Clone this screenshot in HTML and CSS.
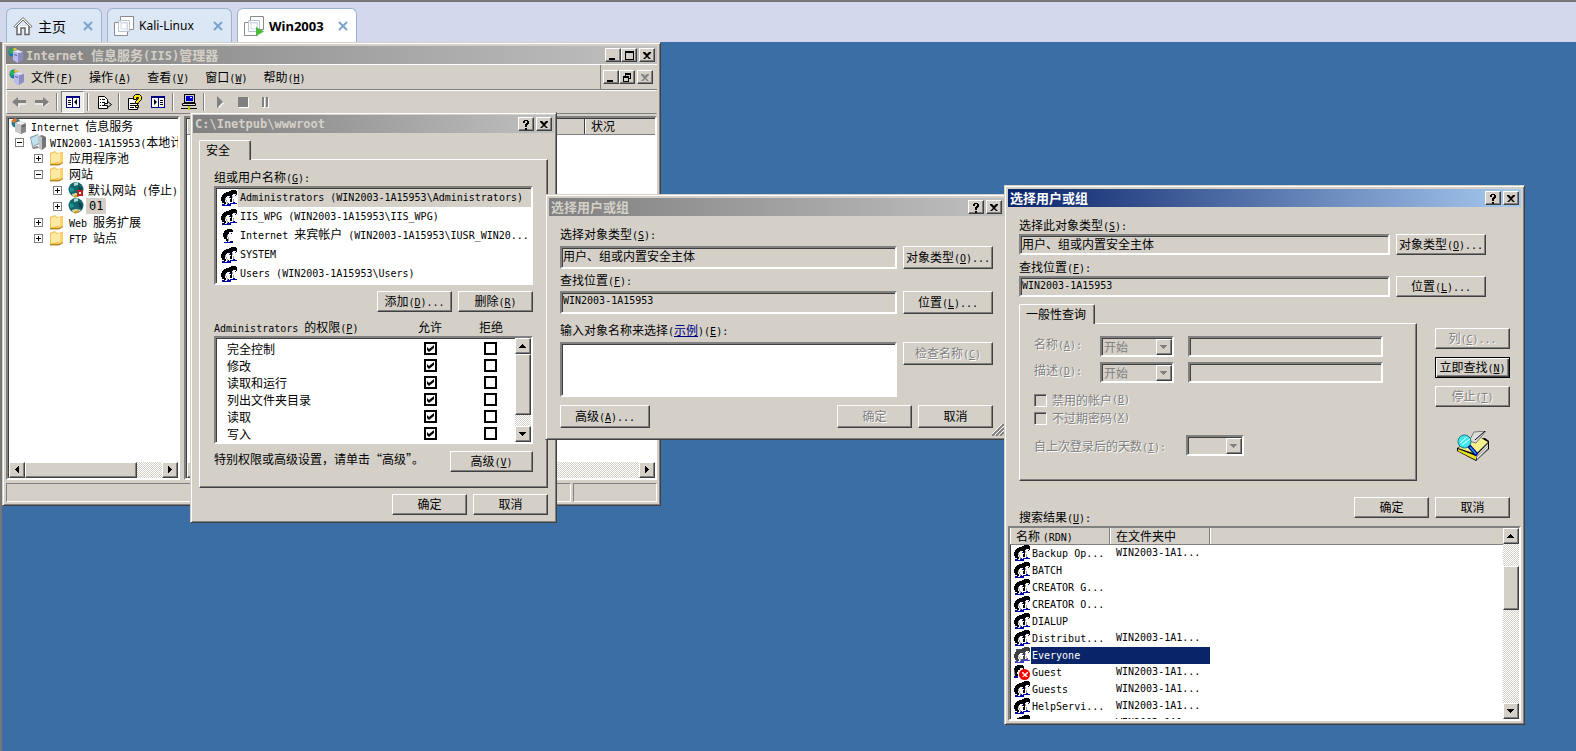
FILE: index.html
```html
<!DOCTYPE html>
<html lang="zh-CN">
<head>
<meta charset="utf-8">
<title>Win2003</title>
<link rel="stylesheet" href="styles.css">
</head>
<body>
<svg class="sprite" aria-hidden="true">
  <symbol id="i-group" viewBox="0 0 16 16">
    <path d="M7 3V2h1V1h2V0h5v1h1v4h-1v6h-2v1H8V5H7z" fill="#000"/>
    <path d="M11 5h1V4h3v3h1v1h-1v3h-2v1h-2z" fill="#fff"/><path d="M11 6h1v2h-1zM12 9h1v3h-1z" fill="#a0a0a0"/><path d="M14 5h1v1h-1z" fill="#00f"/>
    <path d="M9 14v-1h3v-1h2v1h2v1z" fill="#0000a8"/>
    <path d="M0 7h1V5h1V4h1V3h2V2h3v1h1v3h1v1H8v5H6v2H3v-1H1v-2H0z" fill="#000"/>
    <path d="M4 8h1V7h1V6h3v2h1v1H9v3H7v2H5v-2H4z" fill="#fff"/><path d="M4 8h1v2H4zM5 10h1v2H5zM6 12h1v2H6z" fill="#a0a0a0"/><path d="M8 7h1v1H8z" fill="#00f"/>
    <path d="M1 14h3v1h2v-1h1v-1h1v1h2v2H1z" fill="#0000a8"/>
  </symbol>
  <symbol id="i-user" viewBox="0 0 16 16">
    <path d="M2 5h1V3h1V2h2V1h5v1h1v3h-1v7H8v1H5v-2H3V9H2z" fill="#000"/>
    <path d="M6 7h1V6h1V4h4v3h1v1h-1v4H9v2H7v-3H6z" fill="#fff"/><path d="M6 7h1v2H6zM7 9h1v4H7z" fill="#a0a0a0"/><path d="M10 5h1v1h-1z" fill="#00f"/>
    <path d="M3 14h3v-1h1v1h2v-1h3v2H3z" fill="#0000a8"/>
  </symbol>
  <symbol id="i-guest" viewBox="0 0 16 16">
    <path d="M0 4h1V2h2V1h6v1h1v7H9v3H3v1H1z" fill="#000"/><path d="M4 6h2V4h3v4H8v3H5v2H4v-3H3V8h1z" fill="#fff"/><path d="M0 12h4v2H0z" fill="#0000a8"/>
    <circle cx="10.500" cy="10.500" r="5.500" fill="#f00"/><path d="M8 8h1l2 2 2-2h1v1l-2 2 2 2h-2l-1-1-2 1H8l2-2-2-2z" fill="#fff"/>
  </symbol>
  <symbol id="i-folder" viewBox="0 0 16 16">
    <path d="M1 3l5-2 2 2 6-1v11l-4 2-9-1z" fill="#f1c14e"/><path d="M2 4l4-2 1 2 5-1v9l-10 1z" fill="#ffe9a6"/><path d="M11 5l3-2v10l-3 2z" fill="#ffd566"/><path d="M1 14h9l4-2v1l-4 2.500H1z" fill="#b78a2c"/>
  </symbol>
  <symbol id="i-iis" viewBox="0 0 16 16">
    <circle cx="5" cy="5" r="4.500" fill="#1878a8"/><path d="M1 3l3-2 2 2-1 3-3 1z" fill="#30b050"/><path d="M5 1h3l1 2-3 1z" fill="#f0c020"/>
    <path d="M5 4l5-1 5 2v8l-5 3-5-3z" fill="#8c8cc4"/><path d="M5 4l5 2v10l-5-3z" fill="#b9b9ec"/><path d="M5 4l5-1 5 2-5 1z" fill="#e4e4fa"/><path d="M6 7l3 1v1L6 8z" fill="#5858a0"/>
  </symbol>
  <symbol id="i-globes" viewBox="0 0 16 16">
    <circle cx="5" cy="5" r="4.500" fill="#187c94"/><path d="M0 3l4-3 3 2-4 3z" fill="#e07830"/>
    <path d="M4 5l5-2 6 2v9l-5 2-6-3z" fill="#888"/><path d="M4 5l6 2v9l-6-3z" fill="#c8c8c8"/><path d="M4 5l5-2 6 2-5 2z" fill="#eee"/><path d="M11 8l3-1v1l-3 1z" fill="#444"/>
  </symbol>
  <symbol id="i-server" viewBox="0 0 16 16">
    <path d="M0 3l8-3 2 10-8 3z" fill="#8c9aa4"/><path d="M1 4l7-3 1 8-6 3z" fill="#bfe3ef"/><path d="M2 13l6-1 1 2-6 1z" fill="#888"/>
    <path d="M9 2l3-1 4 2v10l-4 3-3-2z" fill="#777"/><path d="M9 2l3 1v13l-3-2z" fill="#c4c4c4"/><path d="M13 5h2v1h-2z" fill="#3070b0"/>
  </symbol>
  <symbol id="i-site" viewBox="0 0 16 16">
    <circle cx="8" cy="7.500" r="7.500" fill="#12666c"/><path d="M6 1l4-1v3l-4 1z" fill="#b8d8d4"/><path d="M2 5l3 1 1 3-4 1z" fill="#1e9494"/><path d="M10 4l4 2v5l-3-2z" fill="#0c4450"/><path d="M4 12l4-1 5 1-2 2-6 1z" fill="#e8dca0"/><path d="M5 14l6-2v2l-4 2z" fill="#c8a030"/>
  </symbol>
  <symbol id="i-vm" viewBox="0 0 20 20">
    <g fill="#fff" stroke="#8a8a8a"><path d="M6.500.500h13v13h-13z"/><path d="M.500 6.500h13v13H.500z"/></g><path d="M4.500 4.500h11v11h-11z" fill="#fff" fill-opacity=".7" stroke="#b8c4d4"/><path d="M7 7h6v6H7z" fill="none" stroke="#cdd9e8"/>
  </symbol>
  <symbol id="a-up" viewBox="0 0 8 4"><path d="M0 4h7V3H6V2H5V1H4V0H3v1H2v1H1v1H0z" fill="currentColor"/></symbol>
  <symbol id="a-down" viewBox="0 0 8 4"><path d="M0 0h7v1H6v1H5v1H4v1H3V3H2V2H1V1H0z" fill="currentColor"/></symbol>
  <symbol id="a-left" viewBox="0 0 4 8"><path d="M4 0v7H3V6H2V5H1V4H0V3h1V2h1V1h1V0z" fill="currentColor"/></symbol>
  <symbol id="a-right" viewBox="0 0 4 8"><path d="M0 0v7h1V6h1V5h1V4h1V3H3V2H2V1H1V0z" fill="currentColor"/></symbol>
  <symbol id="c-close" viewBox="0 0 16 14"><path d="M3 3h2l2 2 2-2h2v1L8 7l3 3H9L7 8l-2 2H3l3-3-3-3z" fill="currentColor"/></symbol>
  <symbol id="c-help" viewBox="0 0 16 14"><path d="M4 3h1V2h4v1h1v3H9v1H8v2H6V6h1V5h1V3H6v2H4zM6 10h2v2H6z" fill="currentColor"/></symbol>
  <symbol id="c-min" viewBox="0 0 16 14"><path d="M3 9h6v2H3z" fill="currentColor"/></symbol>
  <symbol id="c-max" viewBox="0 0 16 14"><path d="M3 2h9v9H3zM4 4v6h7V4z" fill="currentColor" fill-rule="evenodd"/></symbol>
  <symbol id="c-restore" viewBox="0 0 16 14"><path d="M5 2h6v6H9V7h1V4H6v1H5zM3 5h6v6H3zm1 2v3h4V7z" fill="currentColor" fill-rule="evenodd"/></symbol>
</svg>

<nav class="vm-tabs">
  <div class="vm-tab home">
    <svg class="vm-icon" viewBox="0 0 20 20"><path d="M1 10.500L10 1.500l9 9-1.500 1L10 4 2.500 11.500z" fill="#fff" stroke="#666"/><path d="M4 10v8.500h4V12h4v6.500h4V10" fill="#fff" stroke="#666" stroke-width="1.500"/></svg>
    <span class="cn">主页</span>
    <button class="tab-close" aria-label="关闭 主页"><svg viewBox="0 0 10 10"><path d="M1 1l8 8M9 1L1 9"/></svg></button>
  </div>
  <div class="vm-tab kali">
    <svg class="vm-icon"><use href="#i-vm"/></svg>
    <span>Kali-Linux</span>
    <button class="tab-close" aria-label="关闭 Kali-Linux"><svg viewBox="0 0 10 10"><path d="M1 1l8 8M9 1L1 9"/></svg></button>
  </div>
  <div class="vm-tab current">
    <svg class="vm-icon" viewBox="0 0 20 20"><use href="#i-vm"/><path d="M12 11l8 4.500-8 4.500z" fill="#4cb83c"/></svg>
    <span>Win2003</span>
    <button class="tab-close" aria-label="关闭 Win2003"><svg viewBox="0 0 10 10"><path d="M1 1l8 8M9 1L1 9"/></svg></button>
  </div>
</nav>

<main class="desktop">

<section class="window iis">
  <header class="title">
    <svg class="ico"><use href="#i-iis"/></svg>
    <h1><span class="l">Internet </span>信息服务<span class="l">(IIS)</span>管理器</h1>
    <div class="caption"><button aria-label="最小化"><svg><use href="#c-min"/></svg></button><button aria-label="最大化"><svg><use href="#c-max"/></svg></button><button class="apart" aria-label="关闭"><svg><use href="#c-close"/></svg></button></div>
  </header>
  <div class="menubar">
    <svg class="ico"><use href="#i-iis"/></svg>
    <button>文件<span class="l">(<u>F</u>)</span></button><button>操作<span class="l">(<u>A</u>)</span></button><button>查看<span class="l">(<u>V</u>)</span></button><button>窗口<span class="l">(<u>W</u>)</span></button><button>帮助<span class="l">(<u>H</u>)</span></button>
    <div class="caption mdi"><button aria-label="最小化"><svg><use href="#c-min"/></svg></button><button aria-label="还原"><svg><use href="#c-restore"/></svg></button><button class="apart" disabled aria-label="关闭"><svg><use href="#c-close"/></svg></button></div>
  </div>
  <div class="toolbar">
    <button aria-label="后退"><svg viewBox="0 0 16 16"><path d="M3 9l5 4v-3h7" stroke="#fff" fill="none"/><path d="M1 8l6-5v3h8v3H7v4z" fill="#808080"/></svg></button>
    <button aria-label="前进"><svg viewBox="0 0 16 16"><path d="M1 10h8v3l6-4" stroke="#fff" fill="none"/><path d="M15 8L9 3v3H1v3h8v4z" fill="#808080"/></svg></button>
    <i></i>
    <button class="pressed" aria-label="显示树"><svg viewBox="0 0 16 16"><path d="M1 2h14v12H1z" fill="#000080"/><path d="M2 4h5v9H2zM8 4h6v9H8z" fill="#fff"/><path d="M3 6h3v1H3zM3 8h3v1H3zM3 10h3v1H3zM12 5v6L9 8z" fill="#000"/></svg></button>
    <i></i>
    <button aria-label="导出列表"><svg viewBox="0 0 16 16"><path d="M2.500 2.500h6l3 3v9h-9z" fill="#fff" stroke="#000"/><path d="M4 5h1v1H4zM6 5h3v1H6zM4 8h1v1H4zM6 8h3v1H6zM4 11h1v1H4zM6 11h3v1H6z" fill="#000"/><path d="M8.500 9.500h3v-2l4 3-4 3v-2h-3z" fill="#ddd" stroke="#000"/></svg></button>
    <i></i>
    <button aria-label="帮助"><svg viewBox="0 0 16 16"><path d="M1.500 4.500h9v11h-9z" fill="#fff" stroke="#000"/><path d="M3 9h5v1H3zM3 11h6v1H3zM3 13h4v1H3z" fill="#000"/><path d="M6.500 5.500v-3l2-2h4l2 2v3l-3 3v1h-3v-2l3-3v-1h-2v2zM8.500 11.500h3v2h-3z" fill="#ffe800" stroke="#000"/></svg></button>
    <button aria-label="显示操作窗格"><svg viewBox="0 0 16 16"><path d="M1 2h14v12H1z" fill="#000080"/><path d="M2 4h6v9H2zM9 4h5v9H9z" fill="#fff"/><path d="M10 6h3v1h-3zM10 8h3v1h-3zM10 10h3v1h-3zM4 5v6l3-3z" fill="#000"/></svg></button>
    <i></i>
    <button aria-label="连接计算机"><svg viewBox="0 0 16 16"><path d="M3 0h11v9H3z" fill="#000"/><path d="M4 1h9v7H4z" fill="#d4d0c8"/><path d="M5 2h7v5H5z" fill="#0000d0"/><path d="M9 3h2v1H9z" fill="#fff"/><path d="M1.500 9.500h13v2h-13z" fill="#ddd" stroke="#000"/><path d="M0 14h16v1H0z" fill="#000"/><path d="M7 12h2v4H7z" fill="#c8c800"/></svg></button>
    <i></i>
    <button aria-label="启动"><svg viewBox="0 0 16 16"><path d="M6 4l6 5-5 5z" fill="#fff"/><path d="M5 2l6 6-6 6z" fill="#808080"/></svg></button>
    <button aria-label="停止"><svg viewBox="0 0 16 16"><path d="M4 4h10v10H4z" fill="#fff"/><path d="M3 3h10v10H3z" fill="#808080"/></svg></button>
    <button aria-label="暂停"><svg viewBox="0 0 16 16"><path d="M5 4h2v10H5zM9 4h2v10H9z" fill="#fff"/><path d="M4 3h2v10H4zM8 3h2v10H8z" fill="#808080"/></svg></button>
  </div>
  <div class="panes">
    <div class="sunken pane tree-pane">
      <ul class="tree">
        <li class="d0"><svg class="ico"><use href="#i-globes"/></svg><span><span class="l">Internet </span>信息服务</span></li>
        <li class="d1"><b class="box"></b><svg class="ico"><use href="#i-server"/></svg><span><span class="l">WIN2003-1A15953(</span>本地计算机<span class="l">)</span></span></li>
        <li class="d2"><b class="box plus"></b><svg class="ico"><use href="#i-folder"/></svg><span>应用程序池</span></li>
        <li class="d2"><b class="box"></b><svg class="ico"><use href="#i-folder"/></svg><span>网站</span></li>
        <li class="d3"><b class="box plus"></b><svg class="ico" viewBox="0 0 16 16"><use href="#i-site"/><path d="M9 8h6v6H9z" fill="#c02020"/><path d="M11 10h2v2h-2z" fill="#fff"/></svg><span>默认网站<span class="l"> (</span>停止<span class="l">)</span></span></li>
        <li class="d3"><b class="box plus"></b><svg class="ico"><use href="#i-site"/></svg><span class="chosen l">01</span></li>
        <li class="d2"><b class="box plus"></b><svg class="ico"><use href="#i-folder"/></svg><span><span class="l">Web </span>服务扩展</span></li>
        <li class="d2"><b class="box plus"></b><svg class="ico"><use href="#i-folder"/></svg><span><span class="l">FTP </span>站点</span></li>
      </ul>
      <div class="hscroll"><button aria-label="向左"><svg class="ah"><use href="#a-left"/></svg></button><div class="thumb"></div><span class="fill"></span><button aria-label="向右"><svg class="ah"><use href="#a-right"/></svg></button></div>
    </div>
    <div class="sunken pane detail-pane">
      <div class="detail-head"><span></span><span>状况</span></div>
      <div class="detail-body"></div>
      <div class="hscroll"><button aria-label="向左"><svg class="ah"><use href="#a-left"/></svg></button><span class="fill"></span><button aria-label="向右"><svg class="ah"><use href="#a-right"/></svg></button></div>
    </div>
  </div>
  <footer class="status"><span></span><span></span></footer>
</section>

<section class="window props">
  <header class="title">
    <h1 class="l">C:\Inetpub\wwwroot</h1>
    <div class="caption"><button aria-label="帮助"><svg><use href="#c-help"/></svg></button><button class="apart" aria-label="关闭"><svg><use href="#c-close"/></svg></button></div>
  </header>
  <div class="props-body">
    <button class="tab">安全</button>
    <div class="panel">
      <div>组或用户名称<span class="l">(<u>G</u>):</span></div>
      <ul class="sunken users">
        <li><svg class="ico"><use href="#i-group"/></svg><span class="l chosen">Administrators (WIN2003-1A15953\Administrators)</span></li>
        <li><svg class="ico"><use href="#i-group"/></svg><span class="l">IIS_WPG (WIN2003-1A15953\IIS_WPG)</span></li>
        <li><svg class="ico"><use href="#i-user"/></svg><span class="l">Internet <em>来宾帐户</em> (WIN2003-1A15953\IUSR_WIN20...</span></li>
        <li><svg class="ico"><use href="#i-group"/></svg><span class="l">SYSTEM</span></li>
        <li><svg class="ico"><use href="#i-group"/></svg><span class="l">Users (WIN2003-1A15953\Users)</span></li>
      </ul>
      <div class="actions user-actions"><button class="btn">添加<span class="l">(<u>D</u>)...</span></button><button class="btn">删除<span class="l">(<u>R</u>)</span></button></div>
      <div class="perm-head"><span><span class="l">Administrators </span>的权限<span class="l">(<u>P</u>)</span></span><span>允许</span><span>拒绝</span></div>
      <div class="sunken perms">
        <table>
          <tr><td>完全控制</td><td><input type="checkbox" checked aria-label="允许 完全控制"></td><td><input type="checkbox" aria-label="拒绝 完全控制"></td></tr>
          <tr><td>修改</td><td><input type="checkbox" checked aria-label="允许 修改"></td><td><input type="checkbox" aria-label="拒绝 修改"></td></tr>
          <tr><td>读取和运行</td><td><input type="checkbox" checked aria-label="允许 读取和运行"></td><td><input type="checkbox" aria-label="拒绝 读取和运行"></td></tr>
          <tr><td>列出文件夹目录</td><td><input type="checkbox" checked aria-label="允许 列出文件夹目录"></td><td><input type="checkbox" aria-label="拒绝 列出文件夹目录"></td></tr>
          <tr><td>读取</td><td><input type="checkbox" checked aria-label="允许 读取"></td><td><input type="checkbox" aria-label="拒绝 读取"></td></tr>
          <tr><td>写入</td><td><input type="checkbox" checked aria-label="允许 写入"></td><td><input type="checkbox" aria-label="拒绝 写入"></td></tr>
        </table>
        <div class="vscroll"><button aria-label="向上"><svg class="av"><use href="#a-up"/></svg></button><div class="thumb"></div><span class="fill"></span><button aria-label="向下"><svg class="av"><use href="#a-down"/></svg></button></div>
      </div>
      <div class="advanced"><span>特别权限或高级设置，请单击“高级”。</span><button class="btn">高级<span class="l">(<u>V</u>)</span></button></div>
    </div>
    <div class="actions"><button class="btn">确定</button><button class="btn">取消</button></div>
  </div>
</section>

<section class="window pick">
  <header class="title">
    <h1>选择用户或组</h1>
    <div class="caption"><button aria-label="帮助"><svg><use href="#c-help"/></svg></button><button class="apart" aria-label="关闭"><svg><use href="#c-close"/></svg></button></div>
  </header>
  <form class="pick-body">
    <label for="p-type">选择对象类型<span class="l">(<u>S</u>):</span></label>
    <div class="field"><input id="p-type" class="sunken" readonly value="用户、组或内置安全主体"><button type="button" class="btn">对象类型<span class="l">(<u>O</u>)...</span></button></div>
    <label for="p-loc">查找位置<span class="l">(<u>F</u>):</span></label>
    <div class="field"><input id="p-loc" class="sunken l" readonly value="WIN2003-1A15953"><button type="button" class="btn">位置<span class="l">(<u>L</u>)...</span></button></div>
    <label for="p-names" class="spaced">输入对象名称来选择<span class="l">(</span><a href="#examples">示例</a><span class="l">)(<u>E</u>):</span></label>
    <div class="field"><textarea id="p-names" class="sunken"></textarea><button type="button" class="btn" disabled>检查名称<span class="l">(<u>C</u>)</span></button></div>
    <div class="actions"><button type="button" class="btn wide">高级<span class="l">(<u>A</u>)...</span></button><button type="button" class="btn" disabled>确定</button><button type="button" class="btn">取消</button></div>
  </form>
  <svg class="grip" viewBox="0 0 12 12"><path d="M0 12L12 0M4 12l8-8M8 12l4-4" stroke="#808080" stroke-width="2"/><path d="M-1 11L11-1M3 11l9-9M7 11l5-5" stroke="#fff"/></svg>
</section>

<section class="window find">
  <header class="title active">
    <h1>选择用户或组</h1>
    <div class="caption"><button aria-label="帮助"><svg><use href="#c-help"/></svg></button><button class="apart" aria-label="关闭"><svg><use href="#c-close"/></svg></button></div>
  </header>
  <form class="find-body">
    <div class="scope">
      <label for="f-type">选择此对象类型<span class="l">(<u>S</u>):</span></label>
      <div class="field"><input id="f-type" class="sunken" readonly value="用户、组或内置安全主体"><button type="button" class="btn">对象类型<span class="l">(<u>O</u>)...</span></button></div>
      <label for="f-loc">查找位置<span class="l">(<u>F</u>):</span></label>
      <div class="field"><input id="f-loc" class="sunken l" readonly value="WIN2003-1A15953"><button type="button" class="btn">位置<span class="l">(<u>L</u>)...</span></button></div>
    </div>
    <div class="query">
      <div class="query-main">
        <button type="button" class="tab">一般性查询</button>
        <div class="panel">
          <div class="criteria">
            <label for="q-name" class="off">名称<span class="l">(<u>A</u>):</span></label>
            <span class="combo"><select disabled aria-label="名称条件"><option>开始</option></select><span class="drop"><svg class="av"><use href="#a-down"/></svg></span></span>
            <input id="q-name" class="sunken" disabled>
            <label for="q-desc" class="off">描述<span class="l">(<u>D</u>):</span></label>
            <span class="combo"><select disabled aria-label="描述条件"><option>开始</option></select><span class="drop"><svg class="av"><use href="#a-down"/></svg></span></span>
            <input id="q-desc" class="sunken" disabled>
          </div>
          <div class="checks">
            <label class="off"><input type="checkbox" disabled>禁用的帐户<span class="l">(<u>B</u>)</span></label>
            <label class="off"><input type="checkbox" disabled>不过期密码<span class="l">(<u>X</u>)</span></label>
          </div>
          <div class="days">
            <label for="q-days" class="off">自上次登录后的天数<span class="l">(<u>I</u>):</span></label>
            <span class="combo"><select id="q-days" disabled><option></option></select><span class="drop"><svg class="av"><use href="#a-down"/></svg></span></span>
          </div>
        </div>
      </div>
      <div class="side">
        <button type="button" class="btn" disabled>列<span class="l">(<u>C</u>)...</span></button>
        <button type="button" class="btn default">立即查找<span class="l">(<u>N</u>)</span></button>
        <button type="button" class="btn" disabled>停止<span class="l">(<u>T</u>)</span></button>
        <svg class="search-art" viewBox="0 0 32 32"><path d="M0 17l14-8 14-2 4 3v8L19 30 0 20z" fill="#000"/><path d="M1 17L22 6l9 5-12 12z" fill="#f4f08c"/><path d="M1 18l18 7v4L1 20z" fill="#e8e020"/><path d="M19 25l12-13v6L20 29z" fill="#a8a8a8"/><path d="M20 24l11-10M20 27l11-11" stroke="#eee"/><path d="M12 10l5-9 12-1-10 12z" fill="#ddd" stroke="#777"/><path d="M18 9L28 0" stroke="#000"/><circle cx="7.500" cy="10.500" r="6.500" fill="#3ce8f0" stroke="#167c88"/><path d="M3 12l7-6M5 14l8-6" stroke="#fff"/><path d="M12 15l8 9" stroke="#000080" stroke-width="4"/><path d="M13 16l6 7" stroke="#00a8ff" stroke-width="1.500"/></svg>
      </div>
    </div>
    <div class="find-foot"><span>搜索结果<span class="l">(<u>U</u>):</span></span><div class="actions"><button type="button" class="btn">确定</button><button type="button" class="btn">取消</button></div></div>
  </form>
  <div class="sunken results">
    <table>
      <thead><tr><th>名称 <span class="l">(RDN)</span></th><th>在文件夹中</th><th></th></tr></thead>
      <tbody class="l">
        <tr><td><div><svg class="ico"><use href="#i-group"/></svg><span>Backup Op...</span></div></td><td>WIN2003-1A1...</td><td></td></tr>
        <tr><td><div><svg class="ico"><use href="#i-group"/></svg><span>BATCH</span></div></td><td></td><td></td></tr>
        <tr><td><div><svg class="ico"><use href="#i-group"/></svg><span>CREATOR G...</span></div></td><td></td><td></td></tr>
        <tr><td><div><svg class="ico"><use href="#i-group"/></svg><span>CREATOR O...</span></div></td><td></td><td></td></tr>
        <tr><td><div><svg class="ico"><use href="#i-group"/></svg><span>DIALUP</span></div></td><td></td><td></td></tr>
        <tr><td><div><svg class="ico"><use href="#i-group"/></svg><span>Distribut...</span></div></td><td>WIN2003-1A1...</td><td></td></tr>
        <tr class="selected"><td><div><svg class="ico"><use href="#i-group"/></svg><span>Everyone</span></div></td><td></td><td></td></tr>
        <tr><td><div><svg class="ico"><use href="#i-guest"/></svg><span>Guest</span></div></td><td>WIN2003-1A1...</td><td></td></tr>
        <tr><td><div><svg class="ico"><use href="#i-group"/></svg><span>Guests</span></div></td><td>WIN2003-1A1...</td><td></td></tr>
        <tr><td><div><svg class="ico"><use href="#i-group"/></svg><span>HelpServi...</span></div></td><td>WIN2003-1A1...</td><td></td></tr>
        <tr><td><div><svg class="ico"><use href="#i-group"/></svg><span>IIS_WPG</span></div></td><td>WIN2003-1A1...</td><td></td></tr>
      </tbody>
    </table>
    <div class="vscroll"><button aria-label="向上"><svg class="av"><use href="#a-up"/></svg></button><span class="fill before"></span><div class="thumb"></div><span class="fill"></span><button aria-label="向下"><svg class="av"><use href="#a-down"/></svg></button></div>
  </div>
</section>

</main>
</body>
</html>
```
FILE: styles.css
```css
:root {
  --face: #d4d0c8;
  --dark: #404040;
  --shade: #808080;
  --cjk: "Noto Sans CJK SC", sans-serif;
  --mono: "DejaVu Sans Mono", "Noto Sans CJK SC", monospace;
}

* { box-sizing: border-box; }

body {
  margin: 0;
  min-height: 100vh;
  display: flex;
  flex-direction: column;
  overflow: hidden;
  font: 12px/16px var(--cjk);
  color: #000;
  background: #3a6ea5;
}

button, input, select, textarea {
  font: inherit;
  color: inherit;
  margin: 0;
  padding: 0;
  border: 0;
  border-radius: 0;
  background: none;
  appearance: none;
}

ul { list-style: none; margin: 0; padding: 0; }
svg { display: block; flex: none; }
.sprite { position: absolute; width: 0; height: 0; }
.ico { width: 16px; height: 16px; }

/* Half-width Latin runs beside full-width characters */
.l { font-family: var(--mono); font-size: 10px; white-space: pre; }
span.l { line-height: 10px; }
tbody.l { white-space: nowrap; }
em { font: 12px/12px var(--cjk); }

/* Virtual machine tabs */
.vm-tabs {
  flex: none;
  display: flex;
  align-items: flex-end;
  gap: 5px;
  height: 42px;
  padding-left: 6px;
  background: #d3d8ec;
  border-top: 2px solid #777;
}
.vm-tab {
  display: flex;
  align-items: center;
  height: 34px;
  padding: 0 8px 0 6px;
  font: 12px/20px "Noto Sans", sans-serif;
  background: #dce7f5;
  border: 1px solid #9ab3cf;
  border-bottom: 0;
  border-radius: 6px 6px 0 0;
}
.vm-tab.home { width: 96px; }
.vm-tab.kali { width: 125px; }
.vm-tab.current { width: 120px; background: #fff; font-size: 13px; font-weight: bold; }
.vm-icon { width: 20px; height: 20px; margin-right: 5px; }
.vm-tab .cn { font: 14px/20px var(--cjk); }
.tab-close { margin-left: auto; }
.tab-close svg { width: 10px; height: 10px; fill: none; stroke: #7ba4cc; stroke-width: 2; }

.desktop { position: relative; flex: 1; border-left: 2px solid #777; }

/* Windows */
.window {
  position: absolute;
  display: flex;
  flex-direction: column;
  padding: 3px;
  background: var(--face);
  border: 1px solid;
  border-color: var(--face) var(--dark) var(--dark) var(--face);
  box-shadow: inset 1px 1px #fff, inset -1px -1px var(--shade);
}
.iis { left: 0; top: 0; width: 659px; height: 464px; }
.props { left: 188px; top: 70px; width: 367px; height: 411px; padding: 2px; }
.pick { left: 543px; top: 152px; width: 463px; height: 246px; }
.find { left: 1002px; top: 143px; width: 521px; height: 540px; }

.title {
  flex: none;
  display: flex;
  align-items: center;
  height: 18px;
  padding: 0 2px;
  color: var(--face);
  background: linear-gradient(90deg, #808080, #c0c0c0);
}
.title.active { color: #fff; background: linear-gradient(90deg, #0a246a, #a6caf0); }
.title h1 { flex: 1; margin: 0; font-size: 13px; font-weight: bold; line-height: 16px; }
.title h1.l, .title .l { font-size: 12px; }
.title .ico { margin-right: 2px; }

.caption { display: flex; color: #000; }
.caption button, .drop, .hscroll button, .vscroll button, .thumb {
  display: grid;
  place-items: center;
  background: var(--face);
  border: 1px solid;
  border-color: #fff var(--dark) var(--dark) #fff;
  box-shadow: inset -1px -1px var(--shade);
}
.caption button { width: 16px; height: 14px; }
.caption svg { width: 16px; height: 14px; }
.caption .apart { margin-left: 2px; }
.caption button:disabled { color: var(--shade); }

.sunken {
  background: #fff;
  border: 2px solid;
  border-color: var(--shade) #fff #fff var(--shade);
  box-shadow: inset 1px 1px var(--dark);
}

/* Menu and tool bars */
.menubar {
  flex: none;
  display: flex;
  align-items: center;
  height: 26px;
  padding-left: 2px;
  border-top: 1px solid #fff;
  border-left: 1px solid #fff;
  border-bottom: 1px solid var(--shade);
}
.menubar > button { padding: 0 8px; }
.menubar > .ico { margin-right: -2px; }
.mdi { align-self: stretch; align-items: center; margin-left: auto; padding: 0 4px 0 2px; border-left: 1px solid var(--shade); }
.toolbar {
  flex: none;
  display: flex;
  align-items: center;
  height: 24px;
  border: 1px solid;
  border-color: #fff var(--face) var(--shade) #fff;
}
.toolbar button { display: grid; place-items: center; width: 23px; height: 22px; }
.toolbar svg { width: 16px; height: 16px; }
.toolbar i { width: 2px; height: 18px; margin: 0 3px; border-left: 1px solid var(--shade); border-right: 1px solid #fff; }
.toolbar .pressed { background: #ecebe6; border: 1px solid; border-color: var(--shade) #fff #fff var(--shade); }

.panes { flex: 1; display: flex; gap: 4px; min-height: 0; padding: 2px 0; }
.pane { display: flex; flex-direction: column; min-width: 0; overflow: hidden; }
.tree-pane { width: 174px; padding-left: 1px; }
.detail-pane { flex: 1; padding: 1px 0 0 1px; }
.tree { flex: 1; }
.tree li { display: flex; align-items: center; height: 16px; white-space: nowrap; }
.tree .ico { margin-right: 4px; }
.tree .d0 { padding-left: 2px; }
.tree .d1 { padding-left: 6px; }
.tree .d2 { padding-left: 25px; }
.tree .d3 { padding-left: 44px; }
.tree .chosen { margin-left: -2px; padding: 3px; background: var(--face); font-size: 12px; }
.box {
  flex: none;
  width: 9px;
  height: 9px;
  margin-right: 6px;
  border: 1px solid var(--shade);
  background: linear-gradient(#000, #000) center / 5px 1px no-repeat #fff;
}
.box.plus { background: linear-gradient(#000, #000) center / 5px 1px no-repeat, linear-gradient(#000, #000) center / 1px 5px no-repeat #fff; }

.detail-head { flex: none; display: flex; height: 16px; background: var(--face); border-bottom: 1px solid var(--shade); }
.detail-head span { padding-left: 5px; border-left: 1px solid #fff; line-height: 14px; }
.detail-head span:first-child { width: 398px; border-right: 1px solid var(--dark); }
.detail-body { flex: 1; }

.status { flex: none; display: flex; gap: 2px; height: 19px; margin-top: 1px; }
.status span { flex: 1; border: 1px solid; border-color: var(--shade) #fff #fff var(--shade); }
.status span:last-child { flex: 0 0 84px; }

/* Scroll bars */
.hscroll { flex: none; display: flex; height: 16px; }
.vscroll { flex: none; display: flex; flex-direction: column; width: 16px; }
.hscroll button, .vscroll button { flex: none; width: 16px; height: 16px; }
.hscroll .thumb { width: 112px; }
.fill { flex: 1; background: repeating-conic-gradient(#fff 0 25%, var(--face) 0 50%) 0 0 / 2px 2px; }
.ah { width: 4px; height: 8px; }
.av { width: 8px; height: 4px; }

/* Buttons and tabs */
.btn {
  flex: none;
  width: 75px;
  height: 21px;
  padding-bottom: 2px;
  line-height: 16px;
  white-space: nowrap;
  background: var(--face);
  border: 1px solid;
  border-color: #fff var(--dark) var(--dark) #fff;
  box-shadow: inset -1px -1px var(--shade);
}
.btn:disabled, .off { color: var(--shade); text-shadow: 1px 1px #fff; }
.btn.default { border-color: #000; box-shadow: inset 1px 1px #fff, inset -1px -1px var(--dark), inset -2px -2px var(--shade); }
.actions { display: flex; justify-content: flex-end; gap: 6px; }
.tab {
  position: relative;
  display: block;
  height: 20px;
  margin-bottom: -1px;
  padding: 0 6px 2px;
  text-align: left;
  white-space: nowrap;
  background: var(--face);
  border: 1px solid;
  border-color: #fff var(--dark) transparent #fff;
  border-bottom: 0;
  border-radius: 2px 2px 0 0;
  box-shadow: inset -1px 0 var(--shade);
}
.panel {
  border: 1px solid;
  border-color: #fff var(--dark) var(--dark) #fff;
  box-shadow: inset -1px -1px var(--shade);
}

/* Folder properties */
.props-body { padding: 7px 6px 0; }
.props .tab { width: 52px; }
.props .panel { width: 349px; height: 329px; padding: 9px 14px 0; margin-bottom: 6px; }
.props-body > .actions { width: 349px; }
.users { height: 99px; margin-top: 1px; }
.users li { display: flex; align-items: center; height: 19px; padding-left: 5px; }
.users span { flex: 1; margin-left: 1px; padding-left: 2px; line-height: 18px; }
.users .chosen { background: var(--face); }
.user-actions { margin-top: 6px; }
.perm-head { display: flex; margin-top: 7px; }
.perm-head > :first-child { width: 204px; }
.perm-head > :last-child { margin-left: 37px; }
.perms { display: flex; height: 108px; margin-top: 1px; overflow: hidden; }
.perms table { flex: 1; align-self: flex-start; margin-top: 2px; border-collapse: collapse; table-layout: fixed; }
.perms tr { height: 17px; }
.perms td { padding: 0; line-height: 17px; }
.perms td:nth-child(1) { width: 208px; padding-left: 11px; }
.perms td:nth-child(2) { width: 60px; }
.perms input {
  display: block;
  width: 13px;
  height: 13px;
  border: 2px solid #000;
}
.perms input:checked::before {
  content: "";
  display: block;
  width: 7px;
  height: 7px;
  margin: 1px;
  background: #000;
  clip-path: polygon(0 2px, 2px 4px, 7px 0, 7px 3px, 2px 7px, 0 5px);
}
.perms .thumb { height: 61px; }
.perms .vscroll { height: 104px; }
.advanced { display: flex; justify-content: space-between; margin-top: 7px; }
.advanced span { white-space: nowrap; }
.advanced .btn { width: 83px; }

/* Object picker */
.pick-body { padding: 10px 11px 0; }
.pick-body label, .scope label { display: block; margin: 3px 0; }
.pick-body label:first-child { margin: 0 0 4px; }
.pick-body label.spaced { margin: 8px 0 4px; }
.pick-body a { color: #000080; }
.field { display: flex; align-items: flex-start; gap: 6px; }
.field input, .field textarea { flex: 1; min-width: 0; padding-left: 1px; }
.field input { height: 23px; padding-bottom: 4px; background: var(--face); }
.field textarea { height: 55px; resize: none; }
.field .btn, .btn.wide { width: 90px; }
.pick .btn { height: 23px; }
.pick .actions { margin-top: 8px; }
.btn.wide { margin-right: auto; }
.grip { position: absolute; right: 3px; bottom: 3px; width: 12px; height: 12px; }

/* Object search */
.find-body { padding: 10px 11px 0; }
.scope { margin-right: 24px; }
.scope label { margin: 4px 0 1px; }
.scope label:first-child { margin: 0 0 1px; }
.scope .field input { height: 21px; padding-bottom: 3px; }
.query { display: flex; gap: 18px; margin-top: 7px; }
.query-main { flex: 1; }
.query .tab { width: 76px; }
.query .panel { height: 158px; padding: 12px 14px 0; }
.criteria { display: grid; grid-template-columns: 66px 74px 195px; row-gap: 5px; }
.criteria label { line-height: 16px; }
.criteria input { height: 21px; margin-left: 14px; width: 195px; background: var(--face); }
.combo { position: relative; height: 21px; border: 2px solid; border-color: var(--shade) #fff #fff var(--shade); box-shadow: inset 1px 1px var(--dark); }
.combo select { display: block; width: 100%; height: 17px; padding-left: 2px; line-height: 16px; color: var(--shade); opacity: 1; }
.drop { position: absolute; right: 0; top: 1px; width: 16px; height: 16px; color: var(--shade); }
.checks { margin-top: 8px; }
.checks label { display: flex; align-items: center; height: 18px; }
.checks input { width: 13px; height: 13px; margin-right: 5px; border: 1px solid; border-color: var(--shade) #fff #fff var(--shade); box-shadow: inset 1px 1px var(--dark); }
.days { display: flex; align-items: center; margin-top: 8px; }
.days label { width: 152px; }
.days .combo { width: 58px; }
.side { display: flex; flex-direction: column; align-items: center; gap: 8px; padding-top: 24px; }
.search-art { width: 32px; height: 32px; margin-top: 16px; }
.find-foot { display: flex; justify-content: space-between; align-items: flex-start; margin-top: 16px; }
.find-foot > span { margin-top: 12px; }

.results { display: flex; flex: 1; min-height: 0; margin-top: 1px; overflow: hidden; }
.results table { flex: 1; align-self: flex-start; border-collapse: collapse; table-layout: fixed; }
.results th { height: 16px; padding: 0 0 0 6px; font-weight: normal; line-height: 14px; text-align: left; white-space: nowrap; background: var(--face); border-bottom: 1px solid var(--shade); box-shadow: inset -1px 0 var(--shade), inset 1px 0 #fff; }
.results th:nth-child(1), .results th:nth-child(2) { width: 100px; }
.results th:last-child { box-shadow: inset 1px 0 #fff; }
.results tbody tr { height: 17px; }
.results td { padding: 0 0 0 6px; line-height: 16px; overflow: hidden; }
.results td:first-child { padding-left: 4px; }
.results td div { display: flex; height: 17px; align-items: center; }
.results td div span { flex: 1; margin-left: 1px; padding-left: 1px; line-height: 17px; }
.selected td:nth-child(2), .selected td div span { background: #0a246a; color: #fff; }
.selected .ico { opacity: .75; background: linear-gradient(#0a246a, #0a246a) center / 12px 12px no-repeat; }
.results .before { flex: 0 0 22px; }
.results .thumb { height: 44px; }
```
